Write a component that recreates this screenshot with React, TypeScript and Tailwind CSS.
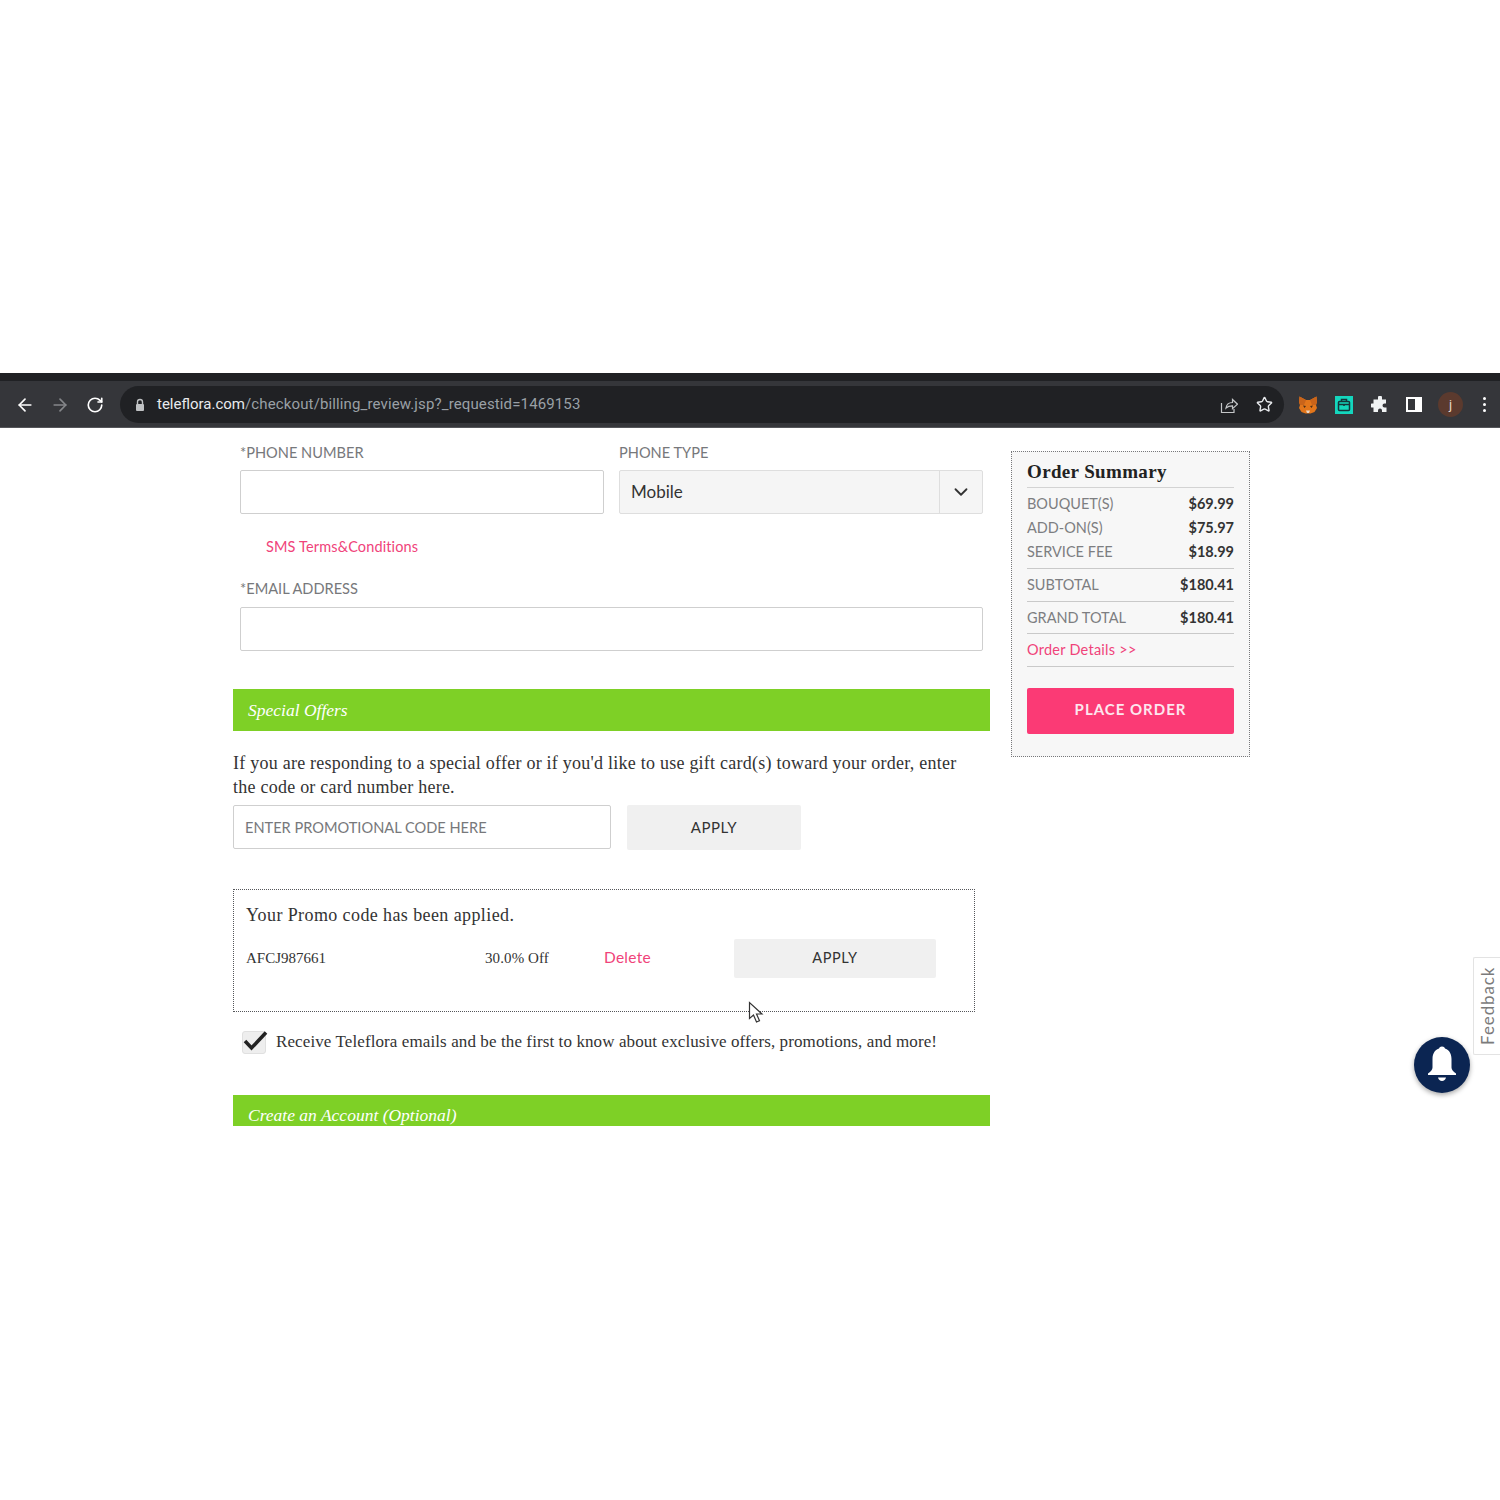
import { ArrowLeft, ArrowRight, ChevronDown, RotateCw, Star } from "lucide-react";

const labelClass = "block text-[14.6px] leading-[20px] text-[#77787b]";
const serif = "font-['Liberation_Serif',serif]";

const summaryRows = [
  { label: "BOUQUET(S)", value: "$69.99" },
  { label: "ADD-ON(S)", value: "$75.97" },
  { label: "SERVICE FEE", value: "$18.99" },
];

function BrowserBar() {
  return (
    <div className="h-[55px] border-b border-[#55565a] bg-[#35363a] font-['Roboto',sans-serif]">
      <div className="h-2 bg-[#202124]" />
      <div className="flex h-[46px] items-center pt-[1px]">
        <div className="flex w-[120px] items-center gap-[15px] pl-[15px]">
          <ArrowLeft size={20} strokeWidth={2} className="text-white" />
          <ArrowRight size={20} strokeWidth={2} className="text-[#85878a]" />
          <RotateCw size={18} strokeWidth={2.2} className="ml-[1px] text-white" />
        </div>
        <div className="flex h-[37px] w-[1164px] items-center rounded-full bg-[#202124] pr-[11px] pl-[14px]">
          <svg width="12" height="14" viewBox="0 0 12 14" className="mr-[11px]">
            <path d="M3.5 6V4a2.5 2.5 0 0 1 5 0v2" fill="none" stroke="#c0c2c4" strokeWidth="1.4" />
            <rect x="2" y="6" width="8" height="7" rx="1" fill="#c0c2c4" />
          </svg>
          <span className="text-[15px] text-[#e8eaed]">teleflora.com</span>
          <span className="text-[15px] tracking-[0.13px] text-[#9aa0a6]">/checkout/billing_review.jsp?_requestid=1469153</span>
          <div className="ml-auto flex items-center gap-[18px]">
            <svg width="18" height="18" viewBox="0 0 18 18" fill="none" stroke="#c4c6c8" strokeWidth="1.2">
              <path d="M1.5 7v9.5h12.5V13" />
              <path d="M6 12c.5-3.5 3-5.5 6.5-5.5V3.5l5 4.7-5 4.5V9.800C9.800 9.800 7.500 10.500 6 12z" />
            </svg>
            <Star size={17} strokeWidth={2} className="text-[#e8eaed]" />
          </div>
        </div>
        <div className="flex flex-1 items-center pl-[15px]">
          {/* metamask fox */}
          <svg width="18" height="18" viewBox="0 0 18 18" className="mr-[18px]">
            <path d="M0.5 0.5 7 4h4l6.500-3.500L18 6l-1 3 1 3-2.500 4-4 1.500h-5L2.500 16 0 12l1-3-1-3z" fill="#e2761b" />
            <path d="M0.5 0.500 7 4 5 9 1 9 0 6zM17.500 0.500 11 4l2 5h4l1-3z" fill="#c9641a" />
            <path d="M4 9.500l3 .5-1.500 2zM14 9.500l-3 .5 1.500 2z" fill="#4a2f18" />
            <path d="M7 14.500h4l-1 2.500H8z" fill="#e8d8c8" />
          </svg>
          <div className="mr-[18px] flex h-[18px] w-[18px] items-center justify-center bg-[#14d6bd]">
            <svg width="14" height="14" viewBox="0 0 14 14" fill="none" stroke="#16343a" strokeWidth="1.500">
              <rect x="1.500" y="3.500" width="11" height="9" rx="1" />
              <path d="M4.500 3.500V1.500h5v2M1.500 6.500h11M7 6v2" />
            </svg>
          </div>
          <svg width="18" height="18" viewBox="0 0 18 18" className="mr-[17px]">
            <path d="M7 1.500a2 2 0 0 1 4 0V3.500h4v4h-1.500a2 2 0 0 0 0 4H15.500V16h-4.500v-1.500a2 2 0 0 0-4 0V16H2.500v-4.500H1a2 2 0 0 1 0-4h1.500V3.500H7z" fill="#f1f3f4" />
          </svg>
          <div className="mr-[16px] flex h-[15px] w-[16px] justify-end border-[2px] border-white">
            <div className="h-full w-[5px] bg-white" />
          </div>
          <div className="mr-[20px] flex h-[25px] w-[25px] items-center justify-center rounded-full bg-[#5b3a2e] text-[13px] text-[#e8d8c8]">
            j
          </div>
          <div className="flex flex-col gap-[3px]">
            <div className="h-[3px] w-[3px] rounded-full bg-white" />
            <div className="h-[3px] w-[3px] rounded-full bg-white" />
            <div className="h-[3px] w-[3px] rounded-full bg-white" />
          </div>
        </div>
      </div>
    </div>
  );
}

function OrderSummary() {
  return (
    <aside className="mt-[23px] ml-[21px] h-[306px] w-[239px] border border-dotted border-[#77787b] bg-[#f7f7f7] px-[15px] pt-[7px]">
      <h2 className={`${serif} border-b border-[#d3d3d3] pb-[3px] text-[19px] leading-[25px] font-bold tracking-[0.35px] text-[#222]`}>
        Order Summary
      </h2>
      <div className="border-b border-[#c9c9c9] pt-[3px] pb-[4px]">
        {summaryRows.map((row) => (
          <div key={row.label} className="flex h-[24.3px] items-center justify-between pt-[1px] text-[14.5px]">
            <span className="text-[#7d7e81]">{row.label}</span>
            <span className="font-bold text-[#333]">{row.value}</span>
          </div>
        ))}
      </div>
      <div className="flex h-[33px] items-center justify-between border-b border-[#c9c9c9] text-[14.5px]">
        <span className="text-[#7d7e81]">SUBTOTAL</span>
        <span className="font-bold text-[#333]">$180.41</span>
      </div>
      <div className="flex h-[32px] items-center justify-between border-b border-[#c9c9c9] text-[14.5px]">
        <span className="text-[#7d7e81]">GRAND TOTAL</span>
        <span className="font-bold text-[#333]">$180.41</span>
      </div>
      <div className="flex h-[33px] items-center border-b border-[#c9c9c9] text-[14.5px] tracking-[0.25px] text-[#f0437a]">
        Order Details &gt;&gt;
      </div>
      <button
        type="button"
        className="mt-[21px] h-[46px] w-full rounded-[2px] bg-[#fb3a75] pb-[3px] text-[15px] font-bold tracking-[1px] text-[#fde6ee]"
      >
        PLACE ORDER
      </button>
    </aside>
  );
}

export default function App() {
  return (
    <div className="min-h-[1500px] bg-white font-['Lato',sans-serif]">
      <div className="h-[373px]" />
      <BrowserBar />
      <div className="relative flex h-[698px] overflow-hidden pl-[233px]">
        <main className="w-[757px]">
          <section className="px-[7px] pt-[15px]">
            <div className="grid grid-cols-2 gap-[15px]">
              <div>
                <label className={labelClass}>*PHONE NUMBER</label>
                <div className="mt-[7px] h-[44px] rounded-[2px] border border-[#cfcfcf] bg-white" />
              </div>
              <div>
                <label className={labelClass}>PHONE TYPE</label>
                <div className="mt-[7px] flex h-[44px] items-center rounded-[2px] border border-[#dedede] bg-[#f5f5f5]">
                  <span className="flex-1 pb-[1px] pl-[11px] text-[17px] text-[#333]">Mobile</span>
                  <div className="flex h-full w-[43px] items-center justify-center border-l border-[#dedede]">
                    <ChevronDown size={22} strokeWidth={2} className="text-[#333]" />
                  </div>
                </div>
              </div>
            </div>
            <p className="mt-[23px] pl-[26px] text-[14.5px] leading-[20px] tracking-[0.14px] text-[#f0437a]">SMS Terms&amp;Conditions</p>
            <label className={`${labelClass} mt-[22px]`}>*EMAIL ADDRESS</label>
            <div className="mt-[8px] h-[44px] rounded-[2px] border border-[#cfcfcf] bg-white" />
          </section>

          <h2 className={`${serif} mt-[38px] flex h-[42px] items-center bg-[#7ed026] pl-[15px] text-[17.5px] text-white italic`}>
            Special Offers
          </h2>
          <p className={`${serif} mt-[20px] w-[735px] text-[18px] leading-[24px] tracking-[0.24px] text-[#333]`}>
            If you are responding to a special offer or if you'd like to use gift card(s) toward your order, enter the code or card number here.
          </p>
          <div className="mt-[6px] flex gap-[16px]">
            <div className="flex h-[44px] w-[378px] items-center rounded-[2px] border border-[#cfcfcf] pt-[1px] pl-[11px] text-[14.6px] text-[#77787b]">
              ENTER PROMOTIONAL CODE HERE
            </div>
            <button type="button" className="h-[45px] w-[174px] rounded-[2px] bg-[#f0f0f0] pb-[1px] text-[15px] tracking-[0.5px] text-[#333]">
              APPLY
            </button>
          </div>

          <div className="mt-[39px] h-[123px] w-[742px] border border-dotted border-[#55565a] pt-[13px] pl-[12px]">
            <p className={`${serif} text-[18px] leading-[24px] tracking-[0.4px] text-[#333]`}>Your Promo code has been applied.</p>
            <div className="mt-[12px] flex h-[39px] items-center pb-[1px]">
              <span className={`${serif} w-[239px] text-[15px] text-[#333]`}>AFCJ987661</span>
              <span className={`${serif} w-[119px] text-[15px] tracking-[0.1px] text-[#333]`}>30.0% Off</span>
              <span className="w-[130px] text-[15.5px] tracking-[0.25px] text-[#f0437a]">Delete</span>
              <button type="button" className="h-[39px] w-[202px] rounded-[2px] bg-[#f0f0f0] pb-[1px] text-[14.5px] tracking-[0.6px] text-[#333]">
                APPLY
              </button>
            </div>
          </div>

          <div className="mt-[18px] flex h-[24px] items-center pl-[9px]">
            <div className="relative h-[23px] w-[24px] rounded-[3px] border border-[#e0e0e0] bg-[#eee]">
              <svg width="28" height="24" viewBox="0 0 28 24" className="absolute -top-[3px] -left-[1px]">
                <path d="M3 12l6.500 7L24 3.500" fill="none" stroke="#222" strokeWidth="3.500" />
              </svg>
            </div>
            <span className={`${serif} ml-[10px] pb-[1px] text-[17px] tracking-[0.1px] text-[#333]`}>
              Receive Teleflora emails and be the first to know about exclusive offers, promotions, and more!
            </span>
          </div>

          <h2 className={`${serif} mt-[41px] h-[42px] bg-[#7ed026] pt-[9px] pl-[15px] text-[17.5px] leading-[22px] text-white italic`}>
            Create an Account (Optional)
          </h2>
        </main>

        <OrderSummary />

        {/* floating bits on top of the page */}
        <svg width="16" height="24" viewBox="0 0 16 24" className="absolute top-[573px] left-[748px]">
          <path d="M1.500 1.500v16l4-3.500 3 7 3-1.300-3-6.700h5.500z" fill="#fff" stroke="#333" strokeWidth="1.200" />
        </svg>
        <div className="absolute top-[529px] right-0 flex h-[98px] w-[27px] items-center justify-center rounded-l-[2px] border border-r-0 border-[#e3e3e3] bg-white pl-[3px]">
          <span className="-rotate-90 text-[17px] tracking-[0.9px] whitespace-nowrap text-[#7b7b7b]">Feedback</span>
        </div>
        <div className="absolute top-[609px] left-[1414px] flex h-[56px] w-[56px] items-center justify-center rounded-full bg-[#0b2552] shadow-[0_2px_5px_rgba(0,0,0,0.35)]">
          <svg width="32" height="40" viewBox="0 0 32 40">
            <circle cx="16" cy="4.500" r="3" fill="#fff" />
            <path d="M16 3c-6.500 0-9.500 5-9.500 11v8.500c0 2-1.500 4-4.500 6v1.500h28v-1.500c-3-2-4.500-4-4.500-6V14c0-6-3-11-9.500-11z" fill="#fff" />
            <path d="M12 32.500h8c-.5 2.200-2 3.500-4 3.500s-3.500-1.300-4-3.500z" fill="#fff" />
          </svg>
        </div>
      </div>
    </div>
  );
}
